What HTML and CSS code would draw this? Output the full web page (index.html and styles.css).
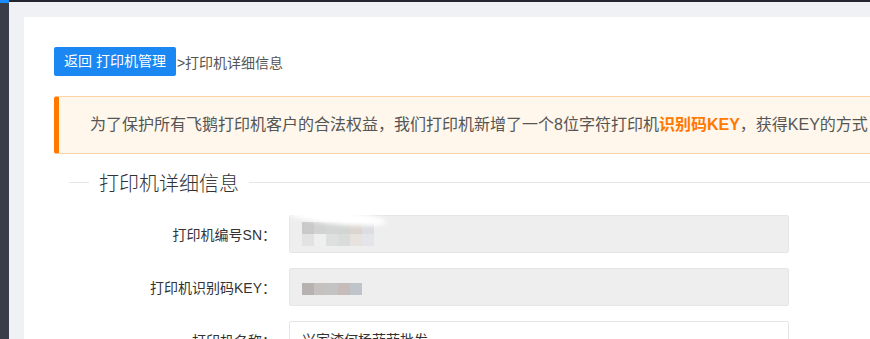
FILE: index.html
```html
<!DOCTYPE html>
<html lang="zh-CN">
<head>
    <meta charset="UTF-8">
    <title>打印机详细信息</title>
    <link rel="stylesheet" href="styles.css">
</head>
<body>
    <div class="sidebar"><div class="sidebar-logo"></div></div>

    <div class="main">
        <div class="topbar"></div>
        <div class="body-wrap">
            <div class="panel">
                <div class="crumb">
                    <a class="btn-back" href="#">返回 打印机管理</a>
                    <span class="crumb-text">&gt;打印机详细信息</span>
                </div>

                <div class="notice">
                    为了保护所有飞鹅打印机客户的合法权益，我们打印机新增了一个8位字符打印机<b>识别码KEY</b>，获得KEY的方式：请查看打印机底部的标签贴纸
                </div>

                <div class="fieldset">
                    <div class="legend">
                        <span class="legend-line short"></span>
                        <span class="legend-title">打印机详细信息</span>
                        <span class="legend-line"></span>
                    </div>

                    <div class="form-row">
                        <label class="form-label">打印机编号SN：</label>
                        <div class="form-input readonly">
                            <span class="smudge"></span>
                            <span class="mosaic">
                                <i style="background:#c9c9c9"></i><i style="background:#d2d2d2"></i><i style="background:#d4d6d6"></i><i style="background:#d3d5d5"></i><i style="background:#dcd4cf"></i><i style="background:#dcdde0"></i>
                                <i style="background:#e2e2e2"></i><i style="background:#efefef"></i><i style="background:#dedfdf"></i><i style="background:#dadcdc"></i><i style="background:#e8e2de"></i><i style="background:#e3e5e8"></i>
                            </span>
                        </div>
                    </div>

                    <div class="form-row">
                        <label class="form-label">打印机识别码KEY：</label>
                        <div class="form-input readonly">
                            <span class="mosaic single">
                                <i style="background:#b7b1af"></i><i style="background:#c4c1bf"></i><i style="background:#c3c3c3"></i><i style="background:#c6bdbb"></i><i style="background:#bfc3ca"></i>
                            </span>
                        </div>
                    </div>

                    <div class="form-row">
                        <label class="form-label">打印机名称：</label>
                        <div class="form-input">兴家渣何杨菲菲批发</div>
                    </div>
                </div>
            </div>
        </div>
    </div>
</body>
</html>
```

FILE: styles.css
```css
html, body {
    margin: 0;
    height: 100%;
}

body {
    display: flex;
    overflow: hidden;
    font-family: "Liberation Sans", "Noto Sans CJK SC", sans-serif;
    font-size: 14px;
    color: #333;
    background-color: #f0f1f5;
}

.sidebar {
    width: 9px;
    flex-shrink: 0;
    background-color: #393d49;
}

.sidebar-logo {
    height: 3px;
    background-color: #1a8cff;
}

.main {
    flex: 1;
    min-width: 0;
}

.topbar {
    height: 2px;
    background-color: #23262e;
}

.body-wrap {
    padding: 15px 0 0 15px;
}

.panel {
    width: 1000px;
    height: 400px;
    padding: 30px;
    background-color: #fff;
}

.crumb {
    display: flex;
    align-items: center;
}

.btn-back {
    display: inline-block;
    height: 29px;
    line-height: 29px;
    padding: 0 10px;
    background-color: #1b87f3;
    color: #fff;
    border-radius: 2px;
    text-decoration: none;
    font-size: 14px;
}

.crumb-text {
    color: #555;
    font-size: 14px;
    margin-left: 1px;
}

.notice {
    margin-top: 20px;
    height: 56px;
    line-height: 56px;
    padding-left: 31px;
    background-color: #fff7eb;
    border: 1px solid #ffd3a6;
    border-left: 5px solid #ff7800;
    border-radius: 3px;
    font-size: 16px;
    color: #555;
    white-space: nowrap;
    overflow: hidden;
}

.notice b {
    color: #ff7800;
}

.fieldset {
    margin: 14px 0 0 15px;
}

.legend {
    display: flex;
    align-items: center;
    height: 28px;
}

.legend-line {
    flex: 1;
    height: 1px;
    background-color: #e6e6e6;
}

.legend-line.short {
    flex: none;
    width: 20px;
}

.legend-title {
    padding: 0 10px;
    font-size: 20px;
    font-weight: 300;
    color: #333;
}

.form-row {
    display: flex;
    align-items: center;
    margin-top: 15px;
}

.legend + .form-row {
    margin-top: 19px;
}

.form-label {
    width: 207px;
    margin-right: 13px;
    text-align: right;
    font-size: 14px;
    color: #333;
}

.form-input {
    position: relative;
    box-sizing: border-box;
    width: 500px;
    height: 38px;
    line-height: 36px;
    padding-left: 12px;
    border: 1px solid #e6e6e6;
    border-radius: 2px;
    background-color: #fff;
    font-size: 14px;
    color: #333;
}

.form-input.readonly {
    background-color: #eee;
}

.mosaic {
    display: grid;
    grid-template-columns: repeat(6, 12px);
    grid-auto-rows: 12px;
    margin-top: 6px;
    width: 72px;
}

.mosaic.single {
    grid-template-columns: repeat(5, 12px);
    margin-top: 14px;
}

.mosaic i {
    display: block;
}

.smudge {
    position: absolute;
    left: -4px;
    top: -6px;
    width: 100px;
    height: 14px;
    border-radius: 50%;
    background-color: #fff;
    filter: blur(2px);
    transform: rotate(6deg);
}
```
